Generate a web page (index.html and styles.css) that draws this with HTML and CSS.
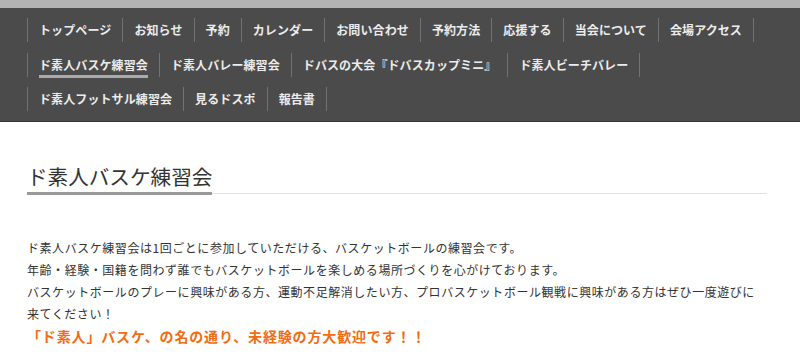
FILE: index.html
```html
<!DOCTYPE html>
<html lang="ja">
<head>
<meta charset="UTF-8">
<meta name="viewport" content="width=device-width,initial-scale=1.0">
<title>ド素人バスケ練習会</title>
<link rel="stylesheet" href="styles.css">
</head>
<body>
<div class="topbar"></div>
<nav class="gnav">
  <ul>
    <li><a href="#">トップページ</a></li>
    <li><a href="#">お知らせ</a></li>
    <li><a href="#">予約</a></li>
    <li><a href="#">カレンダー</a></li>
    <li><a href="#">お問い合わせ</a></li>
    <li><a href="#">予約方法</a></li>
    <li><a href="#">応援する</a></li>
    <li><a href="#">当会について</a></li>
    <li><a href="#">会場アクセス</a></li>
    <li class="break"></li>
    <li class="current"><a href="#"><span>ド素人バスケ練習会</span></a></li>
    <li><a href="#">ド素人バレー練習会</a></li>
    <li><a href="#">ドバスの大会『ドバスカップミニ』</a></li>
    <li><a href="#">ド素人ビーチバレー</a></li>
    <li class="break"></li>
    <li><a href="#">ド素人フットサル練習会</a></li>
    <li><a href="#">見るドスポ</a></li>
    <li><a href="#">報告書</a></li>
  </ul>
</nav>
<div class="main">
  <h1><span>ド素人バスケ練習会</span></h1>
  <p class="lead">ド素人バスケ練習会は1回ごとに参加していただける、バスケットボールの練習会です。<br>
  年齢・経験・国籍を問わず誰でもバスケットボールを楽しめる場所づくりを心がけております。<br>
  バスケットボールのプレーに興味がある方、運動不足解消したい方、プロバスケットボール観戦に興味がある方はぜひ一度遊びに<br>来てください！</p>
  <p class="catch">「ド素人」バスケ、の名の通り、未経験の方大歓迎です！！</p>
</div>
</body>
</html>
```

FILE: styles.css
```css
body{margin:0;font-family:"Noto Sans CJK JP","Noto Sans",sans-serif;background:#fff;color:#333}
.topbar{height:8px;background:#b3b3b3}
.gnav{background:#4b4b4b;border-bottom:1px solid #383838}
.gnav ul{list-style:none;margin:0;padding:5px 0 4px 27px;display:flex;flex-wrap:wrap;max-width:740px}
.gnav li{margin:5.25px -1px 5.25px 0;border-left:1px solid #727272;border-right:1px solid #727272}
.gnav li.break{flex-basis:100%;height:0;border:0;margin:0}
.gnav a{display:block;padding:0 11px;line-height:24px;height:24px;font-size:12px;font-weight:bold;color:#ececec;text-decoration:none;letter-spacing:.1px}
.gnav .current span{display:inline-block;line-height:21px;border-bottom:3px solid #aaa}
.main{padding:0 33px 0 27px}
h1{margin:40px 0 0;font-size:20.6px;font-weight:normal;line-height:28px;color:#333;border-bottom:1px solid #e3e3e3}
h1 span{display:inline-block;padding-bottom:2px;border-bottom:3px solid #999;margin-bottom:-2px}
.lead{margin:43px 0 0;font-size:12px;line-height:22px;letter-spacing:.55px;color:#333}
.catch{margin:0;font-size:14px;line-height:22px;font-weight:bold;letter-spacing:.85px;color:#f36c12}
```
